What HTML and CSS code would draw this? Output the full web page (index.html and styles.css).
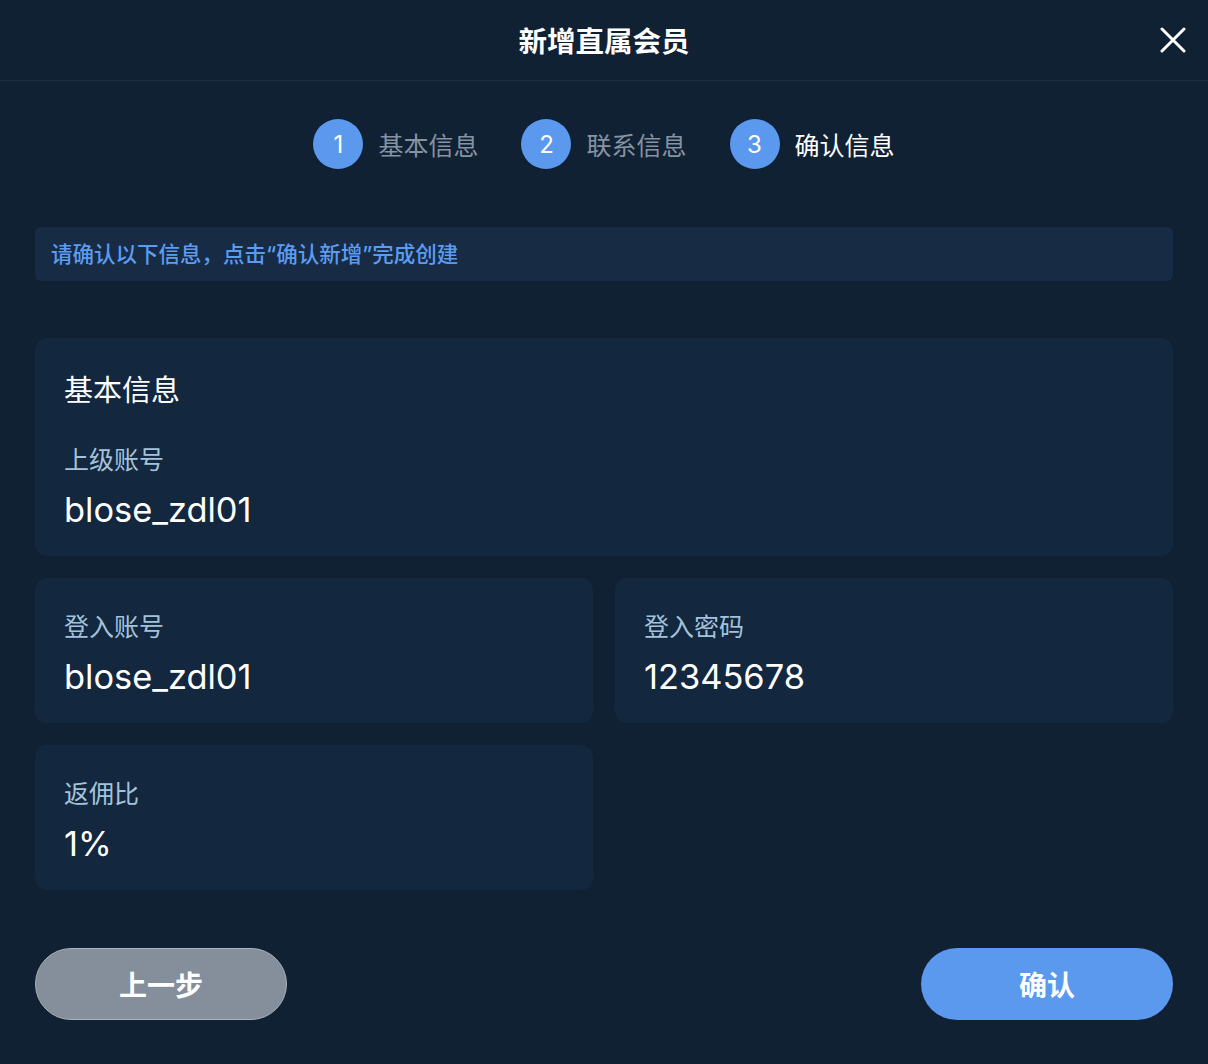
FILE: index.html
```html
<!DOCTYPE html>
<html lang="zh-CN">
<head>
<meta charset="utf-8">
<title>新增直属会员</title>
<link rel="stylesheet" href="styles.css">
</head>
<body>
<div class="dialog">
  <header class="header">
    <h1 class="title">新增直属会员</h1>
    <button class="close" aria-label="关闭">
      <svg width="26" height="26" viewBox="0 0 26 26"><path d="M2 2 L24 24 M24 2 L2 24" stroke="#fff" stroke-width="3" stroke-linecap="round" fill="none"/></svg>
    </button>
  </header>

  <div class="steps">
    <div class="step"><span class="num">1</span><span class="step-label">基本信息</span></div>
    <div class="step"><span class="num">2</span><span class="step-label">联系信息</span></div>
    <div class="step active"><span class="num">3</span><span class="step-label">确认信息</span></div>
  </div>

  <div class="content">
    <div class="notice">请确认以下信息，点击“确认新增”完成创建</div>

    <div class="card card-main">
      <div class="card-title">基本信息</div>
      <div class="label">上级账号</div>
      <div class="value">blose_zdl01</div>
    </div>

    <div class="grid">
      <div class="card">
        <div class="label">登入账号</div>
        <div class="value">blose_zdl01</div>
      </div>
      <div class="card">
        <div class="label">登入密码</div>
        <div class="value">12345678</div>
      </div>
      <div class="card">
        <div class="label">返佣比</div>
        <div class="value">1%</div>
      </div>
    </div>

    <div class="actions">
      <button class="btn btn-prev">上一步</button>
      <button class="btn btn-confirm">确认</button>
    </div>
  </div>
</div>
</body>
</html>
```

FILE: styles.css
```css
* { box-sizing: border-box; }
html, body {
  margin: 0;
  padding: 0;
  background: #112134;
}
body {
  font-family: Inter, "Noto Sans CJK SC", sans-serif;
  color: #fff;
  width: 1208px;
  height: 1064px;
  overflow: hidden;
}
.dialog {
  width: 1208px;
  height: 1064px;
  background: #112134;
}
.header {
  height: 81px;
  border-bottom: 1px solid #1b2e44;
  display: flex;
  align-items: center;
  justify-content: center;
  position: relative;
}
.title {
  margin: 0;
  font-size: 28.5px;
  font-weight: 700;
  line-height: 40px;
  color: #fff;
  font-family: "Noto Sans CJK SC", sans-serif;
}
.close {
  position: absolute;
  right: 22px;
  top: 27px;
  width: 26px;
  height: 26px;
  padding: 0;
  border: 0;
  background: transparent;
  display: flex;
}
.steps {
  display: flex;
  justify-content: center;
  gap: 43px;
  margin-top: 38px;
}
.step {
  display: flex;
  align-items: center;
  gap: 15px;
}
.num {
  width: 50px;
  height: 50px;
  border-radius: 50%;
  background: #5b99ef;
  color: #fff;
  display: flex;
  align-items: center;
  justify-content: center;
  font-size: 24px;
  font-family: Inter, sans-serif;
}
.step-label {
  font-size: 25px;
  color: #8593a2;
  font-family: "Noto Sans CJK SC", sans-serif;
  line-height: 36px;
}
.step.active .step-label { color: #fff; }
.content {
  padding: 58px 35px 0;
}
.notice {
  height: 54px;
  background: #172b45;
  border-radius: 6px;
  color: #5b9cf0;
  font-size: 21.5px;
  font-weight: 500;
  line-height: 54px;
  padding-left: 16px;
  font-family: Inter, "Noto Sans CJK SC", sans-serif;
  margin-bottom: 57px;
}
.card {
  background: #13273e;
  border-radius: 12px;
  padding: 30px 30px 24px 29px;
}
.card-main {
  margin-bottom: 22px;
}
.card-title {
  font-size: 29px;
  line-height: 40px;
  margin-bottom: 33px;
  font-family: "Noto Sans CJK SC", sans-serif;
}
.label {
  font-size: 25px;
  line-height: 35px;
  color: #a3c3dc;
  font-family: "Noto Sans CJK SC", sans-serif;
}
.value {
  font-size: 34.4px;
  line-height: 44px;
  margin-top: 12px;
  color: #fff;
}
.grid {
  display: grid;
  grid-template-columns: 1fr 1fr;
  gap: 22px 22px;
}
.actions {
  display: flex;
  justify-content: space-between;
  margin-top: 58px;
}
.btn {
  width: 252px;
  height: 72px;
  border-radius: 36px;
  font-size: 28px;
  font-weight: 700;
  color: #fff;
  font-family: "Noto Sans CJK SC", sans-serif;
  border: 0;
  padding: 0;
}
.btn-prev {
  background: #848f9b;
  border: 1px solid #a9b1ba;
}
.btn-confirm {
  background: #5b99ef;
}
```
